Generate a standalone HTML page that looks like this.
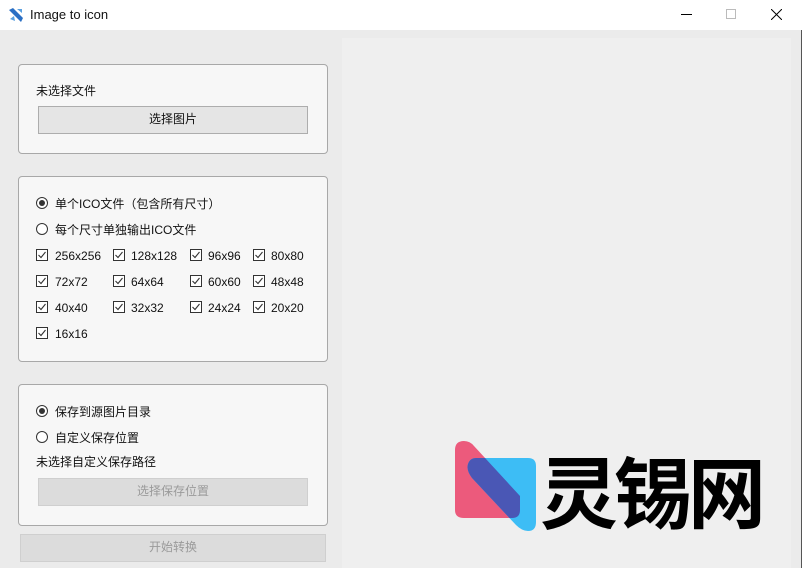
<!DOCTYPE html>
<html><head><meta charset="utf-8"><style>
*{margin:0;padding:0;box-sizing:border-box}
body{width:802px;height:568px;background:#ebebeb;font-family:"Liberation Sans","Noto Sans CJK SC",sans-serif;font-size:12px;color:#111;position:relative;overflow:hidden}
.a{position:absolute}
.title{left:0;top:0;width:802px;height:30px;background:#fff}
.panel{background:#f7f7f7;border:1px solid #a8a8a8;border-radius:4px}
.btn{border:1px solid #adadad;background:#e5e5e5;text-align:center;line-height:25px}
.dis{border-color:#cfcfcf;background:#dcdcdc;color:#9a9a9a}
.rad{width:12px;height:12px;border:1px solid #333;border-radius:50%;background:#fff}
.rad.on::after{content:"";position:absolute;left:2px;top:2px;width:6px;height:6px;border-radius:50%;background:#333}
.t{line-height:14px;white-space:nowrap}
</style></head><body>
<div class="a title"></div>
<svg class="a" style="left:8px;top:7px" width="16" height="16" viewBox="0 0 16 16"><path d="M1 3 L5 1 L15 11 L13 15 Z" fill="#2a6fc4"/><path d="M9 2 L14 2 L14 6 Z" fill="#5aa0e0"/><path d="M2 12 L6 9 L7 14 Z" fill="#5aa0e0"/></svg>
<div class="a t" style="left:30px;top:8px;font-size:13px">Image to icon</div>
<div class="a" style="left:681px;top:14px;width:11px;height:1px;background:#000"></div>
<div class="a" style="left:726px;top:9px;width:10px;height:10px;border:1px solid #bbb"></div>
<svg class="a" style="left:771px;top:9px" width="11" height="11"><path d="M0 0L11 11M11 0L0 11" stroke="#000" stroke-width="1"/></svg>
<div class="a" style="left:342px;top:38px;width:449px;height:530px;background:#efefef"></div>
<div class="a" style="left:801px;top:30px;width:1px;height:538px;background:#555"></div>

<div class="a panel" style="left:18px;top:64px;width:310px;height:90px"></div>
<div class="a t" style="left:36px;top:84px">未选择文件</div>
<div class="a btn" style="left:38px;top:106px;width:270px;height:28px">选择图片</div>

<div class="a panel" style="left:18px;top:176px;width:310px;height:186px"></div>
<div class="a rad on" style="left:36px;top:197px"></div><div class="a t" style="left:55px;top:197px">单个ICO文件（包含所有尺寸）</div>
<div class="a rad" style="left:36px;top:223px"></div><div class="a t" style="left:55px;top:223px">每个尺寸单独输出ICO文件</div>
<svg width="0" height="0" style="position:absolute"><defs><symbol id="ck" viewBox="0 0 12 12"><rect x=".5" y=".5" width="11" height="11" fill="#fff" stroke="#333"/><path d="M2.5 6 L5 8.5 L9.5 3" fill="none" stroke="#333" stroke-width="1.1"/></symbol></defs></svg>
<svg class="a" style="left:36px;top:249px" width="12" height="12"><use href="#ck"/></svg><div class="a t" style="left:55px;top:249px">256x256</div>
<svg class="a" style="left:113px;top:249px" width="12" height="12"><use href="#ck"/></svg><div class="a t" style="left:131px;top:249px">128x128</div>
<svg class="a" style="left:190px;top:249px" width="12" height="12"><use href="#ck"/></svg><div class="a t" style="left:208px;top:249px">96x96</div>
<svg class="a" style="left:253px;top:249px" width="12" height="12"><use href="#ck"/></svg><div class="a t" style="left:271px;top:249px">80x80</div>
<svg class="a" style="left:36px;top:275px" width="12" height="12"><use href="#ck"/></svg><div class="a t" style="left:55px;top:275px">72x72</div>
<svg class="a" style="left:113px;top:275px" width="12" height="12"><use href="#ck"/></svg><div class="a t" style="left:131px;top:275px">64x64</div>
<svg class="a" style="left:190px;top:275px" width="12" height="12"><use href="#ck"/></svg><div class="a t" style="left:208px;top:275px">60x60</div>
<svg class="a" style="left:253px;top:275px" width="12" height="12"><use href="#ck"/></svg><div class="a t" style="left:271px;top:275px">48x48</div>
<svg class="a" style="left:36px;top:301px" width="12" height="12"><use href="#ck"/></svg><div class="a t" style="left:55px;top:301px">40x40</div>
<svg class="a" style="left:113px;top:301px" width="12" height="12"><use href="#ck"/></svg><div class="a t" style="left:131px;top:301px">32x32</div>
<svg class="a" style="left:190px;top:301px" width="12" height="12"><use href="#ck"/></svg><div class="a t" style="left:208px;top:301px">24x24</div>
<svg class="a" style="left:253px;top:301px" width="12" height="12"><use href="#ck"/></svg><div class="a t" style="left:271px;top:301px">20x20</div>
<svg class="a" style="left:36px;top:327px" width="12" height="12"><use href="#ck"/></svg><div class="a t" style="left:55px;top:327px">16x16</div>

<div class="a panel" style="left:18px;top:384px;width:310px;height:142px"></div>
<div class="a rad on" style="left:36px;top:405px"></div><div class="a t" style="left:55px;top:405px">保存到源图片目录</div>
<div class="a rad" style="left:36px;top:431px"></div><div class="a t" style="left:55px;top:431px">自定义保存位置</div>
<div class="a t" style="left:36px;top:455px">未选择自定义保存路径</div>
<div class="a btn dis" style="left:38px;top:478px;width:270px;height:28px">选择保存位置</div>
<div class="a btn dis" style="left:20px;top:534px;width:306px;height:28px">开始转换</div>

<svg class="a" style="left:452px;top:440px" width="100" height="95" viewBox="0 0 100 95">
<defs><clipPath id="pk"><path id="pp" d="M3 10 Q3 1 12 1 Q18 1 22 6 L68 56 L68 70 Q68 78 60 78 L12 78 Q3 78 3 70Z"/></clipPath></defs>
<path d="M3 10 Q3 1 12 1 Q18 1 22 6 L68 56 L68 70 Q68 78 60 78 L12 78 Q3 78 3 70Z" fill="#ec5a7c"/>
<path id="bl" d="M24 18 L76 18 Q84 18 84 26 L84 82 Q84 91 76 91 Q70 91 64 85 L20 38 Q14 30 16 24 Q18 18 24 18Z" fill="#3dbdf5"/>
<path d="M24 18 L76 18 Q84 18 84 26 L84 82 Q84 91 76 91 Q70 91 64 85 L20 38 Q14 30 16 24 Q18 18 24 18Z" fill="#4a57b5" clip-path="url(#pk)"/>
</svg>
<div class="a" style="left:540px;top:444px;font-size:78px;line-height:90px;font-weight:bold;color:#000;font-family:'Noto Sans CJK SC',sans-serif;letter-spacing:-4px">灵锡网</div>
</body></html>
